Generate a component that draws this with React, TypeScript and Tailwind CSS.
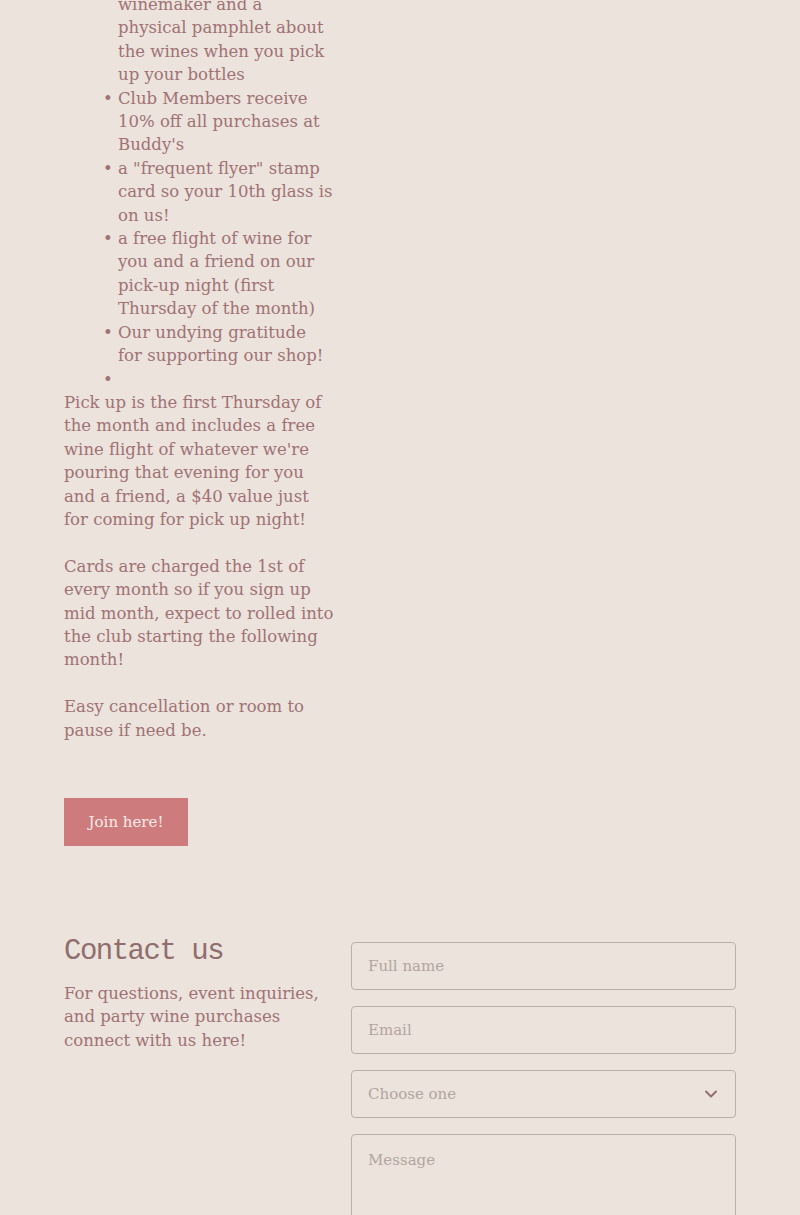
import { ChevronDown } from 'lucide-react';

const body = "font-['DejaVu_Serif',serif] text-[16.5px] leading-[23.4px] text-[#a07275]";

export default function App() {
    return (
        <div className="min-h-[1215px] bg-[#ebe3dc] flex flex-col">
            <div className="px-16 -mt-[7px]">
                <div className={`w-[270px] ${body}`}>
                    <ul className="pl-[54px] list-['•_']">
                        <li className="list-none">winemaker and a physical pamphlet about the wines when you pick up your bottles</li>
                        <li>Club Members receive 10% off all purchases at Buddy's</li>
                        <li>a "frequent flyer" stamp card so your 10th glass is on us!</li>
                        <li>a free flight of wine for you and a friend on our pick-up night (first Thursday of the month)</li>
                        <li>Our undying gratitude for supporting our shop!</li>
                        <li><br /></li>
                    </ul>
                    <p>Pick up is the first Thursday of the month and includes a free wine flight of whatever we're pouring that evening for you and a friend, a $40 value just for coming for pick up night!</p>
                    <br />
                    <p>Cards are charged the 1st of every month so if you sign up mid month, expect to rolled into the club starting the following month!</p>
                    <br />
                    <p>Easy cancellation or room to pause if need be.</p>
                </div>
                <button className="mt-[56px] h-12 w-[124px] bg-[#cd7b7d] text-[#f8ece7] font-['DejaVu_Serif',serif] text-[15px]">
                    Join here!
                </button>
            </div>

            <div className="mt-[88px] px-16 grid grid-cols-[270px_1fr] gap-[17px] flex-1">
                <div>
                    <h2 className="font-['Liberation_Mono',monospace] text-[29px] leading-[36px] tracking-[-1.5px] text-[#8f6e6f]">Contact us</h2>
                    <p className={`mt-[12px] ${body}`}>For questions, event inquiries, and party wine purchases connect with us here!</p>
                </div>
                <form className="flex flex-col gap-4 pt-[8px]">
                    <input placeholder="Full name" className="h-12 w-full rounded border border-[#bcafa8] bg-transparent px-4 font-['DejaVu_Serif',serif] text-[15px] placeholder:text-[#b4a59f] outline-none" />
                    <input placeholder="Email" className="h-12 w-full rounded border border-[#bcafa8] bg-transparent px-4 font-['DejaVu_Serif',serif] text-[15px] placeholder:text-[#b4a59f] outline-none" />
                    <div className="h-12 w-full rounded border border-[#bcafa8] pl-4 pr-[14px] flex items-center justify-between font-['DejaVu_Serif',serif] text-[15px] text-[#b4a59f]">
                        <span>Choose one</span>
                        <ChevronDown className="w-5 h-5 text-[#8f6e6f]" strokeWidth={2.25} />
                    </div>
                    <textarea placeholder="Message" className="h-[100px] w-full rounded border border-[#bcafa8] bg-transparent px-4 py-[14px] font-['DejaVu_Serif',serif] text-[15px] placeholder:text-[#b4a59f] outline-none resize-none" />
                </form>
            </div>
            <div className="h-[9px] bg-black" />
        </div>
    );
}
